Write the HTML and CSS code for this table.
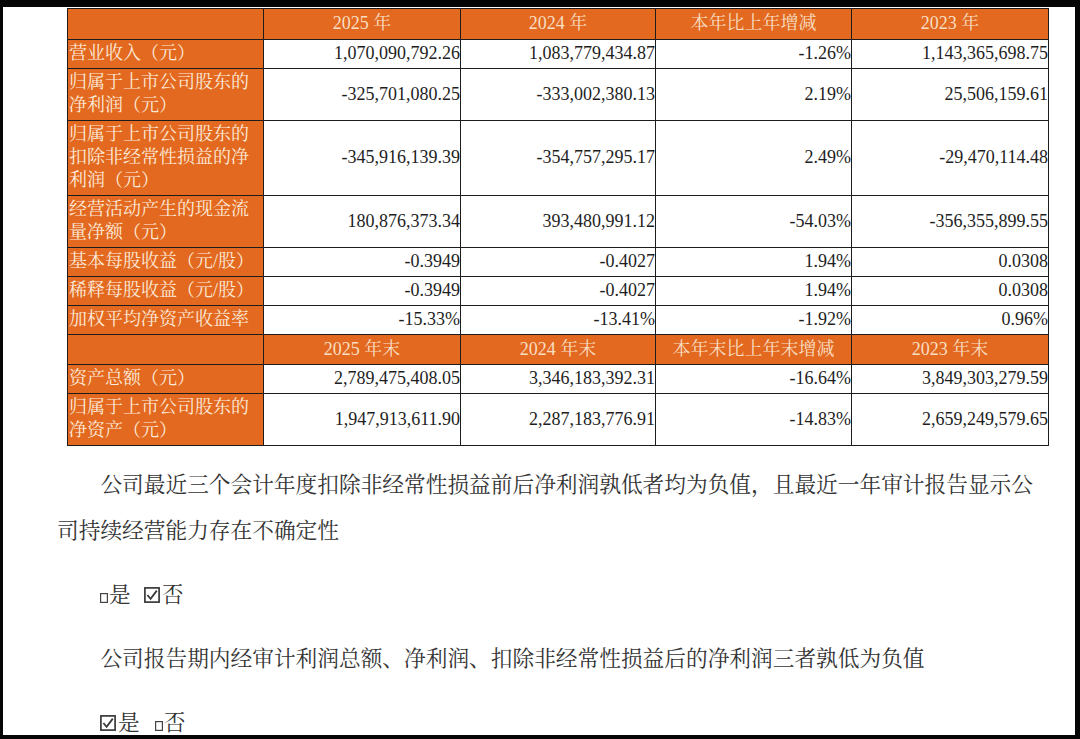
FILE: index.html
```html
<!DOCTYPE html>
<html lang="zh-CN">
<head>
<meta charset="utf-8">
<title>主要会计数据</title>
<link rel="stylesheet" href="styles.css">
</head>
<body>
<div class="frame">
  <table class="data">
    <colgroup>
      <col class="c1"><col class="c2"><col class="c3"><col class="c4"><col class="c5">
    </colgroup>
    <tr class="head head-first">
      <td></td><td>2025 年</td><td>2024 年</td><td>本年比上年增减</td><td>2023 年</td>
    </tr>
    <tr>
      <th>营业收入（元）</th><td>1,070,090,792.26</td><td>1,083,779,434.87</td><td>-1.26%</td><td>1,143,365,698.75</td>
    </tr>
    <tr>
      <th>归属于上市公司股东的净利润（元）</th><td>-325,701,080.25</td><td>-333,002,380.13</td><td>2.19%</td><td>25,506,159.61</td>
    </tr>
    <tr>
      <th>归属于上市公司股东的扣除非经常性损益的净利润（元）</th><td>-345,916,139.39</td><td>-354,757,295.17</td><td>2.49%</td><td>-29,470,114.48</td>
    </tr>
    <tr>
      <th>经营活动产生的现金流量净额（元）</th><td>180,876,373.34</td><td>393,480,991.12</td><td>-54.03%</td><td>-356,355,899.55</td>
    </tr>
    <tr>
      <th>基本每股收益（元/股）</th><td>-0.3949</td><td>-0.4027</td><td>1.94%</td><td>0.0308</td>
    </tr>
    <tr>
      <th>稀释每股收益（元/股）</th><td>-0.3949</td><td>-0.4027</td><td>1.94%</td><td>0.0308</td>
    </tr>
    <tr>
      <th>加权平均净资产收益率</th><td>-15.33%</td><td>-13.41%</td><td>-1.92%</td><td>0.96%</td>
    </tr>
    <tr class="head head-second">
      <td></td><td>2025 年末</td><td>2024 年末</td><td>本年末比上年末增减</td><td>2023 年末</td>
    </tr>
    <tr>
      <th>资产总额（元）</th><td>2,789,475,408.05</td><td>3,346,183,392.31</td><td>-16.64%</td><td>3,849,303,279.59</td>
    </tr>
    <tr>
      <th>归属于上市公司股东的净资产（元）</th><td>1,947,913,611.90</td><td>2,287,183,776.91</td><td>-14.83%</td><td>2,659,249,579.65</td>
    </tr>
  </table>

  <div class="text">
    <p class="para">公司最近三个会计年度扣除非经常性损益前后净利润孰低者均为负值，且最近一年审计报告显示公司持续经营能力存在不确定性</p>
    <p class="choice"><svg class="box-small" viewBox="0 0 8 10"><rect x="0.6" y="0.6" width="6.8" height="8.8" fill="none" stroke="#444" stroke-width="1.2"/></svg>是<svg class="box-check gap-check" viewBox="0 0 16 16"><rect x="0.9" y="0.9" width="14.2" height="14.2" fill="none" stroke="#3a3a3a" stroke-width="1.7"/><path d="M3.4 8 L6.6 11.8 L12.8 3.6" fill="none" stroke="#3a3a3a" stroke-width="1.8"/></svg>否</p>
    <p class="para">公司报告期内经审计利润总额、净利润、扣除非经常性损益后的净利润三者孰低为负值</p>
    <p class="choice"><svg class="box-check" viewBox="0 0 16 16"><rect x="0.9" y="0.9" width="14.2" height="14.2" fill="none" stroke="#3a3a3a" stroke-width="1.7"/><path d="M3.4 8 L6.6 11.8 L12.8 3.6" fill="none" stroke="#3a3a3a" stroke-width="1.8"/></svg>是<svg class="box-small gap-small" viewBox="0 0 8 10"><rect x="0.6" y="0.6" width="6.8" height="8.8" fill="none" stroke="#444" stroke-width="1.2"/></svg>否</p>
  </div>
</div>
</body>
</html>
```

FILE: styles.css
```css
html, body {
  margin: 0;
  padding: 0;
  background: #000;
}

.frame {
  box-sizing: border-box;
  width: 1080px;
  height: 739px;
  background: #fff;
  border-style: solid;
  border-color: #050505;
  border-width: 7px 5px 4px 3px;
  overflow: hidden;
  font-family: "Liberation Serif", "Noto Serif CJK SC", "Noto Sans CJK SC", serif;
}

.data {
  margin: 1px 0 0 64px;
  width: 982px;
  table-layout: fixed;
  border-collapse: collapse;
  font-size: 18px;
  line-height: 23px;
}

.c1 { width: 196px; }
.c2 { width: 197px; }
.c3 { width: 195px; }
.c4 { width: 196px; }
.c5 { width: 197px; }

.data td,
.data th {
  border: 1px solid #1c1c1c;
  padding: 2px 0 3px 0;
  vertical-align: middle;
}

.data th {
  background: #e2691f;
  color: #fdeadb;
  font-weight: normal;
  text-align: left;
  padding-left: 1px;
  padding-right: 2px;
  word-break: break-all;
}

.data td {
  text-align: right;
  color: #1e1e1e;
  padding-right: 0;
}

.data .head td {
  background: #e2691f;
  color: #f9dec4;
  text-align: center;
}

.data .head-first td {
  padding-top: 3px;
  padding-bottom: 4px;
}

.data .head-second td {
  padding-top: 3px;
  padding-bottom: 3px;
}

.text {
  padding: 16px 0 0 54px;
  color: #333;
  font-size: 21.7px;
  line-height: 46px;
  text-spacing-trim: space-all;
}

.text p {
  margin: 0 0 18px 0;
}

.para {
  width: 985px;
  text-indent: 2em;
}

.choice {
  padding-left: 43px;
}

.box-small {
  width: 8px;
  height: 10px;
  vertical-align: -1px;
  margin-right: 1px;
}

.box-check {
  width: 16px;
  height: 16px;
  vertical-align: -1px;
  margin-right: 2px;
}

.gap-check {
  margin-left: 13px;
}

.gap-small {
  margin-left: 15px;
}
```
